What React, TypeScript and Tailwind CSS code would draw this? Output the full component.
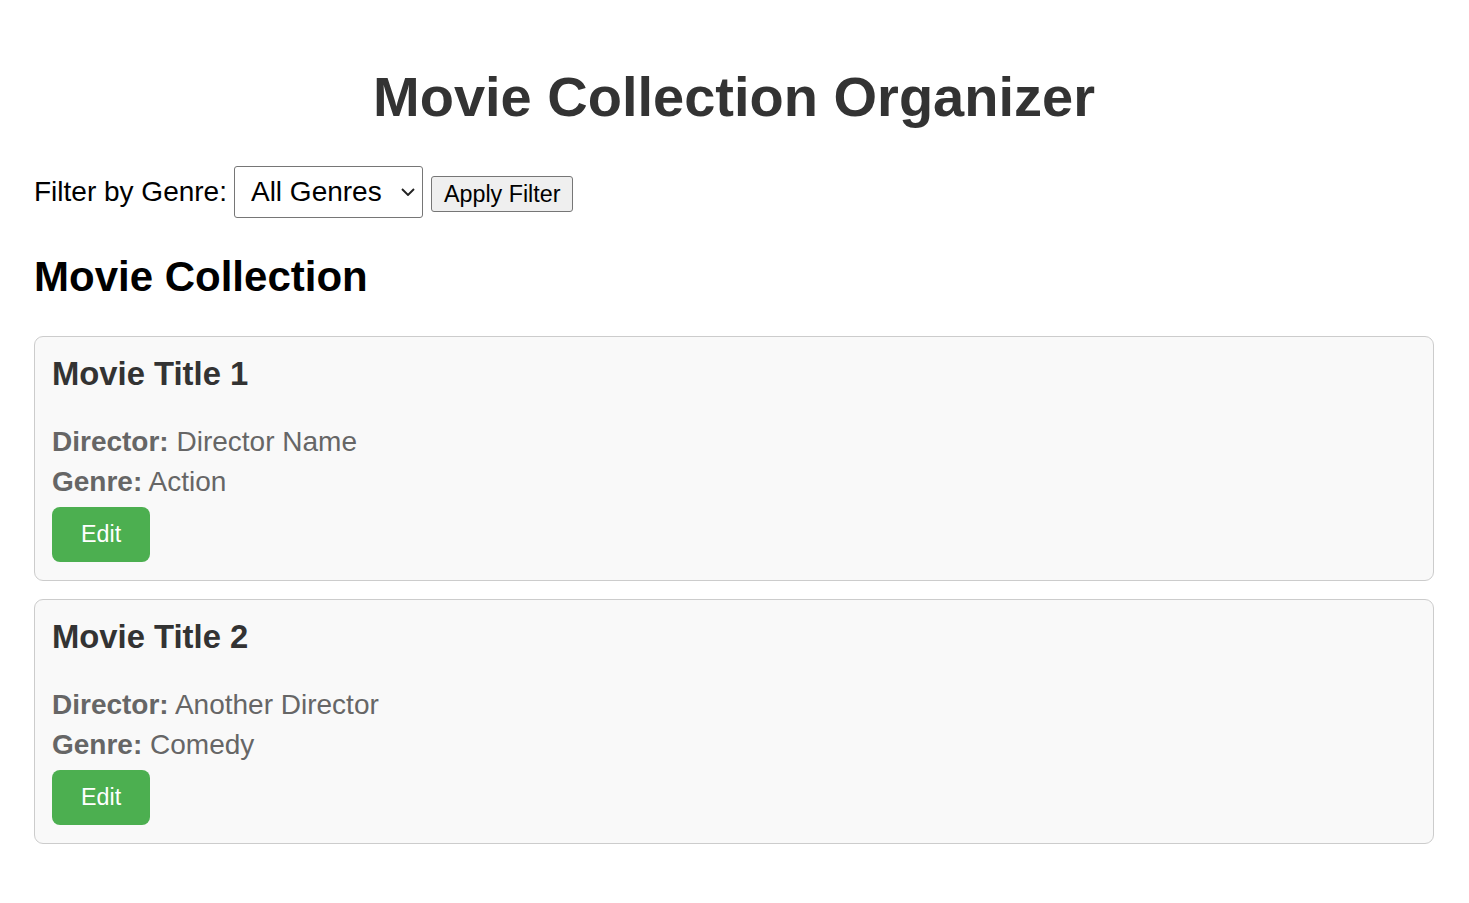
import { useState } from 'react'

type Movie = {
  id: number
  title: string
  director: string
  genre: string
}

const movies: Movie[] = [
  { id: 1, title: 'Movie Title 1', director: 'Director Name', genre: 'Action' },
  { id: 2, title: 'Movie Title 2', director: 'Another Director', genre: 'Comedy' },
]

const MovieCard = ({ movie }: { movie: Movie }) => {
  return (
    <div className="rounded-[9px] border border-[#cccccc] bg-[#f9f9f9] px-[17px] pb-[18px] pt-[18px]">
      <h3 className="text-[32.8px] font-bold leading-[38px] text-[#333333]">{movie.title}</h3>
      <p className="mt-[33px] text-[28px] leading-[32px] text-[#666666]">
        <strong>Director:</strong> {movie.director}
      </p>
      <p className="mt-[8px] text-[28px] leading-[32px] text-[#666666]">
        <strong>Genre:</strong> {movie.genre}
      </p>
      <button className="mt-[9px] h-[55px] rounded-[8px] bg-[#4caf50] px-[29px] text-[23.3px] leading-[27px] text-white">
        Edit
      </button>
    </div>
  )
}

export default function App() {
  const [genre, setGenre] = useState('all')

  return (
    <div className="min-h-screen bg-white pb-[40px] pl-[34px] pr-[35px] pt-[65px] font-['Liberation_Sans',Arial,sans-serif] text-black">
      <h1 className="text-center text-[56px] font-bold leading-[64px] text-[#333333]">
        Movie Collection Organizer
      </h1>

      <div className="mt-[37px] flex h-[52px] items-center">
        <label className="text-[28px] leading-[32px]">Filter by Genre:</label>
        <div className="relative ml-[7px]">
          <select
            value={genre}
            onChange={(e) => setGenre(e.target.value)}
            className="h-[52px] w-[189px] appearance-none rounded-[3px] border border-[#767676] bg-white pl-[16px] pr-[30px] text-[28px] leading-[32px]"
          >
            <option value="all">All Genres</option>
            <option value="action">Action</option>
            <option value="comedy">Comedy</option>
            <option value="drama">Drama</option>
          </select>
          <svg
            className="pointer-events-none absolute right-[8px] top-[22px] h-[8px] w-[14px]"
            viewBox="0 0 14 8"
            fill="none"
            stroke="#222"
            strokeWidth="1.9"
          >
            <path d="M1 1l6 6 6-6" />
          </svg>
        </div>
        <button className="ml-[8px] mt-[4px] h-[36px] rounded-[3px] border border-[#767676] bg-[#efefef] px-[12px] text-[23.3px] leading-[27px]">
          Apply Filter
        </button>
      </div>

      <h2 className="mt-[35px] text-[42px] font-bold leading-[48px]">Movie Collection</h2>

      <div className="mt-[35px] flex flex-col gap-[18px]">
        {movies.map((m) => (
          <MovieCard key={m.id} movie={m} />
        ))}
      </div>
    </div>
  )
}
